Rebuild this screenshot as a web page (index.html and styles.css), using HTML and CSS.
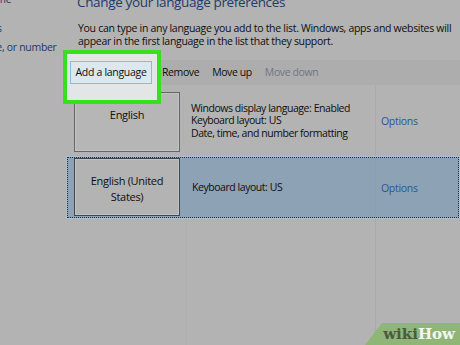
FILE: index.html
```html
<!DOCTYPE html>
<html lang="en">
<head>
<meta charset="utf-8">
<title>Language</title>
<link rel="stylesheet" href="styles.css">
</head>
<body>
<div class="screen">
  <aside class="sidebar">
    <a class="side-link side-home">Control Panel Home</a>
    <a class="side-link side-adv">Advanced settings</a>
    <a class="side-link">Change date, time, or number</a>
  </aside>
  <main class="main">
    <h1 class="title">Change your language preferences</h1>
    <p class="intro">You can type in any language you add to the list. Windows, apps and websites will<br>appear in the first language in the list that they support.</p>
    <div class="toolbar">
      <div class="spot"><button class="add-btn">Add a language</button></div>
      <span class="tool tool-remove">Remove</span>
      <span class="tool tool-up">Move up</span>
      <span class="tool tool-disabled">Move down</span>
    </div>
    <div class="list">
      <div class="row row-first">
        <div class="cell-lang"><div class="tile">English</div></div>
        <div class="cell-desc">Windows display language: Enabled<br>Keyboard layout: US<br>Date, time, and number formatting</div>
        <div class="cell-opt"><a class="opt-link">Options</a></div>
      </div>
      <div class="row row-selected">
        <div class="cell-lang"><div class="tile">English (United<br>States)</div></div>
        <div class="cell-desc">Keyboard layout: US</div>
        <div class="cell-opt"><a class="opt-link">Options</a></div>
      </div>
      <div class="filler">
        <div class="fill-lang"></div>
        <div class="fill-desc"></div>
        <div class="fill-opt"></div>
      </div>
    </div>
  </main>
</div>
<div class="wikihow"><span class="wiki">wiki</span><span class="how">How</span></div>
</body>
</html>
```
FILE: styles.css
```css
html, body {
  margin: 0;
  padding: 0;
}
body {
  width: 460px;
  height: 345px;
  overflow: hidden;
  background: #b3b3b3;
  font-family: "Open Sans", "Noto Sans", sans-serif;
  font-size: 10.5px;
  letter-spacing: -0.3px;
  color: #0e0e0e;
  position: relative;
}
.screen {
  display: flex;
  height: 345px;
}
.sidebar {
  width: 148px;
  margin-left: -82px;
  flex: none;
  display: flex;
  flex-direction: column;
  line-height: 13px;
  margin-top: -7px;
}
.side-link {
  color: #263862;
  white-space: nowrap;
}
.side-home { margin-bottom: 16px; }
.side-adv { margin-bottom: 6px; }
.main {
  flex: 1;
  display: flex;
  flex-direction: column;
}
.title {
  margin: -7px 0 0 11px;
  font-size: 13.5px;
  line-height: 18px;
  font-weight: normal;
  color: #223a6c;
  letter-spacing: -0.35px;
  white-space: nowrap;
}
.intro {
  margin: 10.5px 0 0 12px;
  line-height: 13px;
  white-space: nowrap;
}
.toolbar {
  margin-top: 12.5px;
  height: 25px;
  background: #adadad;
  display: flex;
  align-items: flex-start;
  position: relative;
  z-index: 2;
  letter-spacing: -0.4px;
}
.spot {
  margin: -10px 0 0 -3px;
  width: 87px;
  height: 39px;
  border: 4px solid #37e01c;
  background: #e2e6e7;
  padding: 7px 0 0 3px;
  box-sizing: content-box;
}
.add-btn {
  display: block;
  width: 82px;
  height: 23px;
  padding: 0;
  margin: 0;
  border: 1px solid #8dbad6;
  background: #dce8ee;
  font: inherit;
  letter-spacing: -0.3px;
  color: #0e0e0e;
  line-height: 21px;
  text-align: center;
}
.tool {
  line-height: 25px;
  white-space: nowrap;
}
.tool-remove { margin-left: 1px; }
.tool-up { margin-left: 13px; }
.tool-disabled { margin-left: 13px; color: #6e7586; }
.list {
  display: flex;
  flex-direction: column;
  flex: 1;
}
.row {
  display: flex;
  box-sizing: border-box;
  flex: none;
}
.row-first {
  height: 71px;
}
.row-selected {
  height: 63px;
  background: #8ea2b5;
  border: 1px solid #a9bfd3;
  outline: 1px dotted #2a2f36;
  outline-offset: -2px;
}
.cell-lang {
  width: 120px;
  flex: none;
  padding-left: 8px;
  box-sizing: border-box;
}
.row-first .cell-lang { padding-top: 7px; }
.row-selected .cell-lang { padding-top: 1px; padding-left: 7px; }
.tile {
  width: 106px;
  height: 60px;
  box-sizing: border-box;
  border: 1px solid #666;
  box-shadow: inset 0 0 0 1px #c2c2c2;
  background: #b6b6b6;
  text-align: center;
  font-size: 11px;
  line-height: 16px;
  padding-top: 14px;
}
.row-selected .tile {
  height: 58px;
  border-color: #3e4650;
  background: #b3b3b3;
}
.cell-desc {
  width: 189px;
  flex: none;
  padding-left: 5px;
  box-sizing: border-box;
  display: flex;
  align-items: center;
  line-height: 12.5px;
  white-space: nowrap;
  letter-spacing: -0.45px;
}
.row-selected .cell-desc { width: 188px; }
.cell-opt {
  flex: 1;
  border-left: 1px solid #a8aaaf;
  padding-left: 5px;
  display: flex;
  align-items: center;
}
.row-selected .cell-opt { border-left-color: #8b9fb2; }
.opt-link {
  color: #2c5596;
}
.filler {
  flex: 1;
  display: flex;
}
.fill-lang { width: 120px; flex: none; border-right: 1px solid #aeafb1; }
.fill-desc { width: 188px; flex: none; border-right: 1px solid #a8aaaf; }
.fill-opt { flex: 1; }
.wikihow {
  position: absolute;
  right: 0;
  bottom: 0;
  width: 95px;
  height: 22px;
  background: #8fb577;
  clip-path: polygon(17px 0, 100% 0, 100% 100%, 0 100%);
  font-family: "DejaVu Serif", serif;
  font-weight: bold;
  font-size: 15px;
  letter-spacing: 0;
  line-height: 22px;
  text-align: right;
  padding-right: 5px;
  box-sizing: border-box;
}
.wiki { color: #4b5b42; }
.how { color: #f4f6f0; }
```
